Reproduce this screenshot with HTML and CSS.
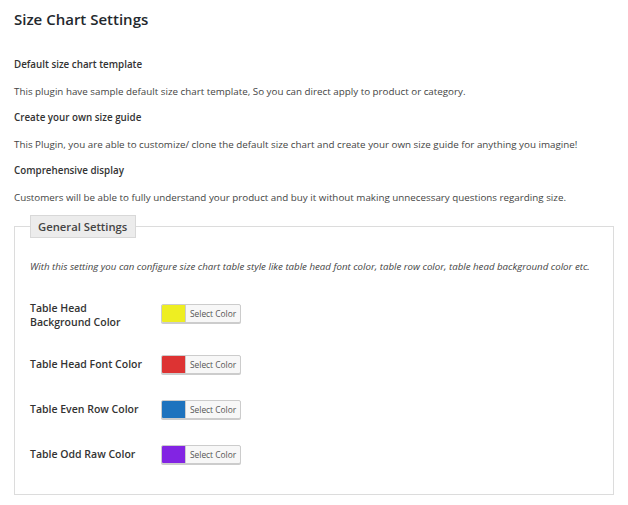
FILE: index.html
```html
<!DOCTYPE html>
<html>
<head>
<meta charset="utf-8">
<link rel="stylesheet" href="styles.css">
</head>
<body>
<div class="wrap">
  <h1 class="title">Size Chart Settings</h1>
  <div class="intro">
    <h3 class="sub">Default size chart template</h3>
    <p class="desc">This plugin have sample default size chart template, So you can direct apply to product or category.</p>
    <h3 class="sub">Create your own size guide</h3>
    <p class="desc">This Plugin, you are able to customize/ clone the default size chart and create your own size guide for anything you imagine!</p>
    <h3 class="sub">Comprehensive display</h3>
    <p class="desc">Customers will be able to fully understand your product and buy it without making unnecessary questions regarding size.</p>
  </div>
  <fieldset class="box">
    <legend class="legend">General Settings</legend>
    <p class="note">With this setting you can configure size chart table style like table head font color, table row color, table head background color etc.</p>
    <div class="rows">
      <div class="row row-tall">
        <div class="label label-tall">Table Head<br>Background Color</div>
        <button class="picker"><span class="swatch sw-yellow"></span><span class="btn-text">Select Color</span></button>
      </div>
      <div class="row">
        <div class="label">Table Head Font Color</div>
        <button class="picker"><span class="swatch sw-red"></span><span class="btn-text">Select Color</span></button>
      </div>
      <div class="row">
        <div class="label">Table Even Row Color</div>
        <button class="picker"><span class="swatch sw-blue"></span><span class="btn-text">Select Color</span></button>
      </div>
      <div class="row">
        <div class="label">Table Odd Raw Color</div>
        <button class="picker"><span class="swatch sw-purple"></span><span class="btn-text">Select Color</span></button>
      </div>
    </div>
  </fieldset>
</div>
</body>
</html>
```
FILE: styles.css
```css
html, body {
  margin: 0;
  padding: 0;
  background: #ffffff;
}
body {
  font-family: "Open Sans", "Noto Sans", sans-serif;
  color: #444;
}
.wrap {
  padding: 9px 14px 0 14px;
  width: 600px;
}
.title {
  margin: 0;
  font-size: 15px;
  font-weight: 600;
  color: #23282d;
  line-height: 20px;
}
.intro {
  margin-top: 29px;
}
.sub {
  margin: 0;
  font-size: 9.8px;
  font-weight: 600;
  color: #333;
  line-height: 14px;
}
.desc {
  margin: 13px 0 12px 0;
  font-size: 9.8px;
  color: #444;
  line-height: 14px;
}
.desc:last-child {
  margin-bottom: 0;
}
.box {
  margin: 10px 0 0 0;
  border: 1px solid #dcdcdc;
  padding: 22px 15px 31px 15px;
  min-width: 0;
}
.legend {
  margin-left: 0;
  padding: 3px 8px 3px 7px;
  background: #ececec;
  border: 1px solid #d8d8d8;
  font-size: 11.25px;
  font-weight: 600;
  color: #444;
  line-height: 15px;
}
.note {
  margin: 0;
  font-size: 9.7px;
  font-style: italic;
  color: #444;
  line-height: 14px;
}
.rows {
  margin-top: 25px;
  display: flex;
  flex-direction: column;
  gap: 27px;
}
.row {
  display: flex;
  align-items: center;
  height: 18px;
}
.row-tall {
  height: 28px;
  margin-bottom: 1px;
}
.label {
  width: 131px;
  font-size: 10.5px;
  font-weight: 600;
  color: #333;
  line-height: 14px;
}
.label-tall {
  padding-top: 3px;
}
.picker {
  display: flex;
  align-items: stretch;
  height: 19px;
  padding: 0;
  margin: 0;
  border: 1px solid #cccccc;
  border-radius: 2px;
  background: #f7f7f7;
  box-shadow: 0 1px 0 #cccccc;
  font-family: "Open Sans", "Noto Sans", sans-serif;
  overflow: hidden;
}
.swatch {
  width: 23px;
  border-right: 1px solid #cccccc;
}
.sw-yellow { background: #eeee22; }
.sw-red { background: #dd3333; }
.sw-blue { background: #1e73be; }
.sw-purple { background: #8224e3; }
.btn-text {
  display: flex;
  align-items: center;
  padding: 0 4px 0 4px;
  font-size: 8.4px;
  color: #555;
}
```
